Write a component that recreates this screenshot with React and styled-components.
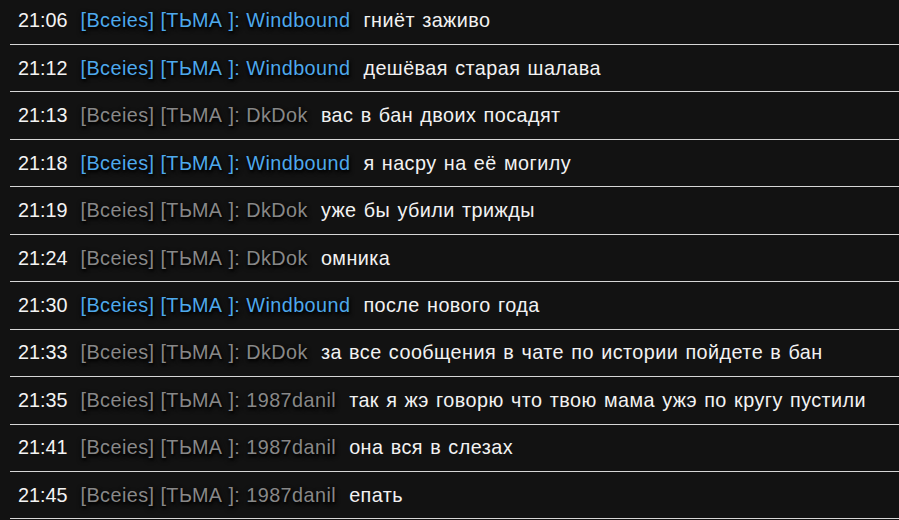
import React from "react";
import styled, { createGlobalStyle } from "styled-components";

const Global = createGlobalStyle`
  html, body {
    margin: 0;
    padding: 0;
    background: #121212;
    overflow: hidden;
  }
`;

const Log = styled.div`
  width: 899px;
  height: 520px;
  overflow: hidden;
  background: #121212;
  font-family: "Liberation Sans", Arial, sans-serif;
  font-size: 19.8px;
`;

const List = styled.ul`
  list-style: none;
  margin: -2.4px 0 0 10px;
  padding: 0;
`;

const Row = styled.li`
  box-sizing: border-box;
  height: 47.45px;
  display: flex;
  align-items: center;
  gap: 13px;
  padding-left: 8px;
  border-bottom: 1px solid #d6d6d6;
  white-space: nowrap;
`;

const Time = styled.span`
  color: #f4f4f4;
`;

const Author = styled.span`
  color: ${p => (p.$highlight ? "#4ea9ec" : "#888888")};
  letter-spacing: 0.45px;
  text-shadow: 1px 2px 3px rgba(0, 0, 0, 0.95), 0 2px 5px rgba(0, 0, 0, 0.8);
`;

const Text = styled.span`
  color: #f2f2f2;
  letter-spacing: 0.45px;
  word-spacing: 1.3px;
`;

const messages = [
  ["21:06", "Windbound", "гниёт заживо", true],
  ["21:12", "Windbound", "дешёвая старая шалава", true],
  ["21:13", "DkDok", "вас в бан двоих посадят", false],
  ["21:18", "Windbound", "я насру на её могилу", true],
  ["21:19", "DkDok", "уже бы убили трижды", false],
  ["21:24", "DkDok", "омника", false],
  ["21:30", "Windbound", "после нового года", true],
  ["21:33", "DkDok", "за все сообщения в чате по истории пойдете в бан", false],
  ["21:35", "1987danil", "так я жэ говорю что твою мама ужэ по кругу пустили", false],
  ["21:41", "1987danil", "она вся в слезах", false],
  ["21:45", "1987danil", "епать", false],
];

export default function App() {
  return (
    <Log>
      <Global />
      <List>
        {messages.map(([time, nick, text, hl]) => (
          <Row key={time}>
            <Time>{time}</Time>
            <Author $highlight={hl}>[Bceies] [ТЬМА ]: {nick}</Author>
            <Text>{text}</Text>
          </Row>
        ))}
      </List>
    </Log>
  );
}
